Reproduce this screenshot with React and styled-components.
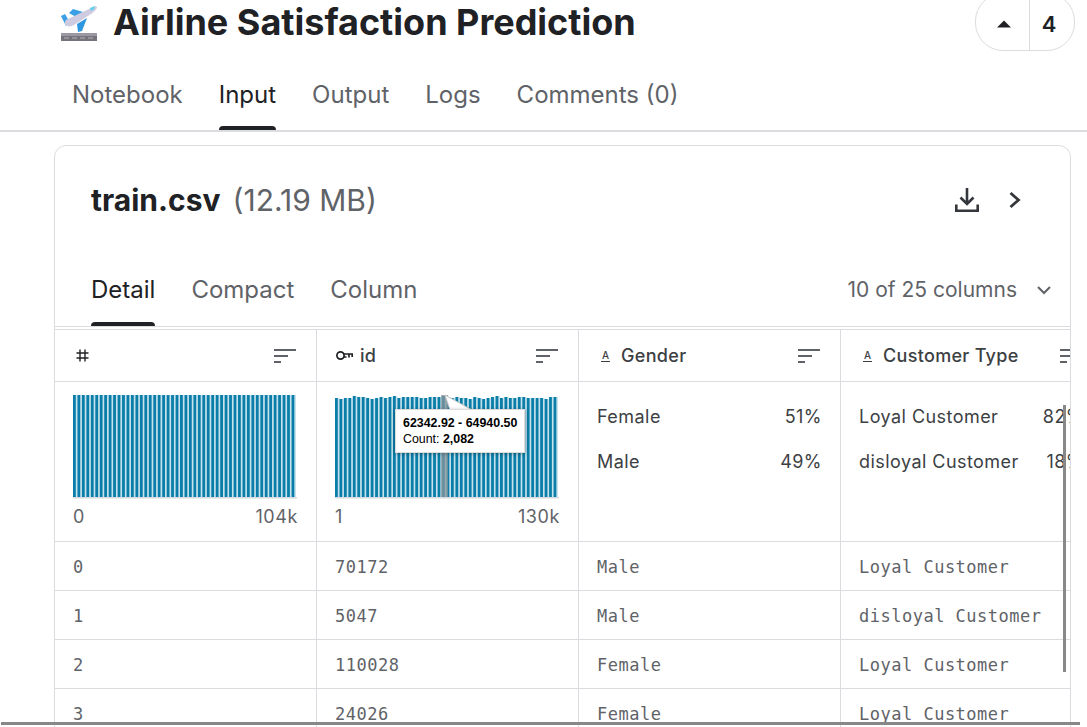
import React from "react";
import styled, { createGlobalStyle } from "styled-components";

const Global = createGlobalStyle`
  html, body { margin: 0; padding: 0; background: #fff; }
  body { font-family: Inter, "Liberation Sans", sans-serif; color: #202124; }
  * { box-sizing: border-box; }
`;

const Page = styled.div`
  position: relative;
  width: 1087px;
  height: 727px;
  overflow: hidden;
  background: #fff;
`;
const TitleRow = styled.header`
  display: flex;
  align-items: flex-start;
  justify-content: space-between;
  height: 60px;
  padding: 0 12px 0 60px;
`;
const TitleLeft = styled.div`
  display: flex;
  align-items: center;
  gap: 16px;
  height: 44px;
`;
const Title = styled.h1`
  margin: 0;
  font-size: 36px;
  font-weight: 700;
  line-height: 44px;
  color: #202124;
`;
const Vote = styled.div`
  display: flex;
  height: 58px;
  width: 100px;
  margin-top: -7px;
  border: 1px solid #dadce0;
  border-radius: 28px;
`;
const VoteArrow = styled.div`
  display: flex;
  align-items: center;
  justify-content: center;
  width: 54px;
  padding: 4px 0 0 2px;
  border-right: 1px solid #dadce0;
`;
const VoteCount = styled.div`
  flex: 1;
  display: flex;
  align-items: center;
  justify-content: center;
  padding: 4px 6px 0 0;
  font-size: 22px;
  font-weight: 600;
  color: #202124;
`;
const MainTabs = styled.nav`
  display: flex;
  gap: 36px;
  height: 72px;
  padding-left: 72px;
  border-bottom: 2px solid #dadce0;
`;
const Tab = styled.div`
  position: relative;
  height: 70px;
  font-size: 24px;
  line-height: 70px;
  color: ${(p) => (p.$active ? "#202124" : "#5f6368")};
  &::after {
    content: "";
    display: ${(p) => (p.$active ? "block" : "none")};
    position: absolute;
    left: 0;
    right: 0;
    bottom: 0;
    height: 4px;
    background: #202124;
    border-radius: 4px 4px 0 0;
  }
`;
const SubTab = styled(Tab)`
  line-height: 68px;
`;
const Card = styled.section`
  position: relative;
  width: 1017px;
  height: 640px;
  margin: 13px 0 0 54px;
  border: 1px solid #dadce0;
  border-radius: 12px 12px 0 0;
  overflow: hidden;
`;
const CardHead = styled.div`
  display: flex;
  align-items: center;
  justify-content: space-between;
  height: 109px;
  padding: 0 48px 2px 36px;
`;
const FileName = styled.div`
  display: flex;
  align-items: baseline;
  gap: 12px;
`;
const FileTitle = styled.span`
  font-size: 30px;
  font-weight: 700;
  color: #202124;
`;
const FileSize = styled.span`
  font-size: 30px;
  color: #5f6368;
`;
const HeadIcons = styled.div`
  display: flex;
  align-items: center;
  gap: 29px;
`;
const SubTabs = styled.div`
  display: flex;
  align-items: flex-end;
  justify-content: space-between;
  height: 72px;
  padding: 0 18px 0 36px;
  border-bottom: 1px solid #dadce0;
`;
const SubTabList = styled.div`
  display: flex;
  gap: 36px;
`;
const ColumnPick = styled.div`
  display: flex;
  align-items: center;
  gap: 19px;
  height: 70px;
  padding-bottom: 3px;
  font-size: 21px;
  color: #5f6368;
`;
const Table = styled.div`
  margin-top: 2px;
  border-top: 1px solid #dadce0;
  width: 1048px;
`;
const Row = styled.div`
  display: grid;
  grid-template-columns: repeat(4, 262px);
  height: ${(p) => p.$h}px;
  border-bottom: 1px solid #dadce0;
`;
const Cell = styled.div`
  border-right: 1px solid #dadce0;
  padding: 0 18px;
  min-width: 0;
`;
const HeadCell = styled(Cell)`
  display: flex;
  align-items: center;
  justify-content: space-between;
  padding: 0 20px 0 19px;
`;
const HeadLabel = styled.div`
  display: flex;
  align-items: center;
  gap: 7px;
  font-size: 18px;
  font-weight: 500;
  letter-spacing: 0.3px;
  color: #3c4043;
  white-space: nowrap;
`;
const TypeMark = styled.span`
  display: block;
  margin: 0 4px 0 3px;
  font-size: 10px;
  font-weight: 500;
  line-height: 10px;
  letter-spacing: 0;
  padding: 0 1px 1px;
  border-bottom: 1px solid #3c4043;
  color: #3c4043;
`;
const HashWrap = styled.span`
  display: block;
  margin-left: 2px;
  line-height: 0;
`;
const ChartCell = styled(Cell)`
  position: relative;
  padding-top: 13px;
`;
const AxisRow = styled.div`
  display: flex;
  justify-content: space-between;
  width: 225px;
  margin-top: 6px;
  font-size: 18px;
  letter-spacing: 0.6px;
  line-height: 24px;
  color: #5f6368;
`;
const CatCell = styled(Cell)`
  padding-top: 23px;
`;
const CatRow = styled.div`
  display: flex;
  justify-content: space-between;
  height: 45px;
  font-size: 18px;
  letter-spacing: 0.45px;
  line-height: 24px;
  color: #3c4043;
  white-space: nowrap;
`;
const DataCell = styled(Cell)`
  display: flex;
  align-items: center;
  padding-top: 2px;
  font-family: "DejaVu Sans Mono", monospace;
  font-size: 17px;
  letter-spacing: 0.5px;
  color: #5f6368;
  white-space: nowrap;
`;
const Tooltip = styled.div`
  position: absolute;
  left: 78px;
  top: 27px;
  width: 130px;
  height: 44px;
  padding: 5px 7px;
  background: #fff;
  border: 1px solid #dcdcdc;
  box-shadow: 0 1px 4px rgba(0, 0, 0, 0.3);
  font-family: "Liberation Sans", Arial, sans-serif;
  font-size: 12.4px;
  line-height: 16px;
  color: #000;
  white-space: nowrap;
`;
const TooltipTail = styled.svg`
  position: absolute;
  left: 122px;
  top: 12px;
`;
const Strong = styled.b`
  font-weight: 700;
`;
const VScroll = styled.div`
  position: absolute;
  left: 1063px;
  top: 405px;
  width: 3px;
  height: 267px;
  background: #888;
`;
const HScroll = styled.div`
  position: absolute;
  left: 1px;
  top: 722px;
  width: 1079px;
  height: 3px;
  background: #888;
`;

const Plane = () => (
  <svg width="37" height="37" viewBox="0 0 37 37">
    <path d="M1 12 L5 10 L9 17 L6 22 Z" fill="#3aa0e6" />
    <path d="M9 9 L13 5 L23 8 L16 13 Z" fill="#3aa0e6" />
    <path d="M17 20 L27 14 L22 27 L18 28 Z" fill="#2f96e0" />
    <path d="M5 20 C4 17 7 15 10 14 L29 5 C32 3 36 1 37 3 C37 5 34 8 31 10 L14 21 C11 23 6 23 5 20 Z" fill="#cfcbe0" />
    <path d="M30 4 L35 2 L34 5 L31 7 Z" fill="#5ed0ee" />
    <rect x="1" y="29" width="36" height="3" fill="#9b98a3" />
    <rect x="1" y="32" width="36" height="7" fill="#75727c" />
    <path d="M4 34h5M12 34h5M20 34h5M28 34h5" stroke="#b7b4bd" strokeWidth="1.2" />
  </svg>
);
const Caret = () => (
  <svg width="14" height="8" viewBox="0 0 14 8"><path d="M0 7.5 L7 0.5 L14 7.5 Z" fill="#202124" /></svg>
);
const Download = () => (
  <svg width="24" height="24" viewBox="0 0 24 24" fill="none" stroke="#33363a" strokeWidth="2.6">
    <path d="M12 0v15M5.5 9.5 12 16 18.5 9.5" />
    <path d="M1.3 16.5v6.2h21.4v-6.2" />
  </svg>
);
const Chevron = () => (
  <svg width="14" height="20" viewBox="0 0 14 20" fill="none" stroke="#33363a" strokeWidth="2.8">
    <path d="M2.5 3l8 7-8 7" />
  </svg>
);
const ChevronDown = () => (
  <svg width="16" height="10" viewBox="0 0 16 10" fill="none" stroke="#5f6368" strokeWidth="2">
    <path d="M2 2l6 6 6-6" />
  </svg>
);
const Sort = () => (
  <svg width="22" height="16" viewBox="0 0 22 16" fill="none" stroke="#5f6368" strokeWidth="2">
    <path d="M0 2h22M0 8h14M0 14h7" />
  </svg>
);
const Hash = () => (
  <svg width="13" height="13" viewBox="0 0 13 13" fill="none" stroke="#202124" strokeWidth="1.4">
    <path d="M4 0.5v12M9 0.5v12M0.5 4h12M0.5 9h12" />
  </svg>
);
const Key = () => (
  <svg width="17" height="11" viewBox="0 0 17 11" fill="none" stroke="#202124" strokeWidth="1.7">
    <circle cx="4.5" cy="5.5" r="3.6" />
    <path d="M8 4h8.2v3M13 4v3.5M8 7h2.5" />
  </svg>
);

const Histogram = ({ offsets, highlight }) => (
  <svg width="225" height="104" viewBox="0 0 225 104" style={{ display: "block" }}>
    {Array.from({ length: 50 }, (_, i) => {
      const t = offsets ? offsets[i] : 0;
      const x = i * 4.46;
      return (
        <g key={i}>
          <rect x={x} y={t} width="4.46" height={102 - t} fill="#c6e2ee" />
          <rect x={x} y={t} width="2.8" height={102 - t} fill="#0a7ea8" />
        </g>
      );
    })}
    {highlight !== undefined && (
      <rect x={highlight * 4.46 - 1} y="0" width="7" height="102" fill="#8a969c" opacity="0.75" />
    )}
    <rect x="0" y="102" width="224" height="1.5" fill="#d5dbe0" />
  </svg>
);

const idOffsets = [
  3, 4, 3, 3, 1, 2, 2, 3, 4, 3, 2, 3, 2, 1, 3, 2, 2, 2, 2, 3, 3, 2, 2, 2, 1, 2,
  3, 2, 3, 3, 4, 2, 3, 4, 3, 2, 1, 3, 2, 3, 3, 2, 2, 3, 3, 3, 3, 4, 2, 2,
];

const rows = [
  ["0", "70172", "Male", "Loyal Customer"],
  ["1", "5047", "Male", "disloyal Customer"],
  ["2", "110028", "Female", "Loyal Customer"],
  ["3", "24026", "Female", "Loyal Customer"],
];

export default function App() {
  return (
    <Page>
      <Global />
      <TitleRow>
        <TitleLeft>
          <Plane />
          <Title>Airline Satisfaction Prediction</Title>
        </TitleLeft>
        <Vote>
          <VoteArrow><Caret /></VoteArrow>
          <VoteCount>4</VoteCount>
        </Vote>
      </TitleRow>
      <MainTabs>
        <Tab>Notebook</Tab>
        <Tab $active>Input</Tab>
        <Tab>Output</Tab>
        <Tab>Logs</Tab>
        <Tab>Comments (0)</Tab>
      </MainTabs>
      <Card>
        <CardHead>
          <FileName>
            <FileTitle>train.csv</FileTitle>
            <FileSize>(12.19 MB)</FileSize>
          </FileName>
          <HeadIcons>
            <Download />
            <Chevron />
          </HeadIcons>
        </CardHead>
        <SubTabs>
          <SubTabList>
            <SubTab $active>Detail</SubTab>
            <SubTab>Compact</SubTab>
            <SubTab>Column</SubTab>
          </SubTabList>
          <ColumnPick>
            10 of 25 columns
            <ChevronDown />
          </ColumnPick>
        </SubTabs>
        <Table>
          <Row $h={52}>
            <HeadCell><HeadLabel><HashWrap><Hash /></HashWrap></HeadLabel><Sort /></HeadCell>
            <HeadCell><HeadLabel><Key />id</HeadLabel><Sort /></HeadCell>
            <HeadCell><HeadLabel><TypeMark>A</TypeMark>Gender</HeadLabel><Sort /></HeadCell>
            <HeadCell><HeadLabel><TypeMark>A</TypeMark>Customer Type</HeadLabel><Sort /></HeadCell>
          </Row>
          <Row $h={160}>
            <ChartCell>
              <Histogram />
              <AxisRow><span>0</span><span>104k</span></AxisRow>
            </ChartCell>
            <ChartCell>
              <Histogram offsets={idOffsets} highlight={24} />
              <AxisRow><span>1</span><span>130k</span></AxisRow>
              <TooltipTail width="40" height="20" viewBox="0 0 40 20">
                <path d="M6 1 L33 16 L11 16 Z" fill="#fff" stroke="#c4c4c4" strokeWidth="1" />
              </TooltipTail>
              <Tooltip>
                <Strong>62342.92 - 64940.50</Strong>
                <br />
                Count: <Strong>2,082</Strong>
              </Tooltip>
            </ChartCell>
            <CatCell>
              <CatRow><span>Female</span><span>51%</span></CatRow>
              <CatRow><span>Male</span><span>49%</span></CatRow>
            </CatCell>
            <CatCell>
              <CatRow><span>Loyal Customer</span><span>82%</span></CatRow>
              <CatRow><span>disloyal Customer</span><span>18%</span></CatRow>
            </CatCell>
          </Row>
          {rows.map((r) => (
            <Row $h={49} key={r[0]}>
              {r.map((v, i) => <DataCell key={i}>{v}</DataCell>)}
            </Row>
          ))}
        </Table>
      </Card>
      <VScroll />
      <HScroll />
    </Page>
  );
}
